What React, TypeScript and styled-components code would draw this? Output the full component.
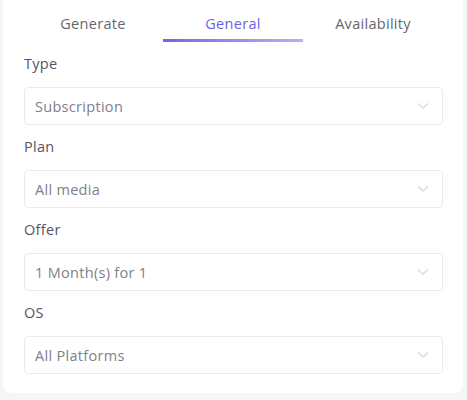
import { useState } from "react";
import styled, { createGlobalStyle } from "styled-components";

const GlobalStyle = createGlobalStyle`
  html, body {
    margin: 0;
    padding: 0;
    background: #f5f6f7;
    font-family: "Open Sans", "Liberation Sans", sans-serif;
    letter-spacing: 0.3px;
  }
`;

const Page = styled.div`
  padding: 0 4px 7px 3px;
  width: 467px;
  box-sizing: border-box;
`;

const Card = styled.div`
  background: #ffffff;
  border-radius: 0 0 8px 8px;
  padding: 0 20px 19px 20px;
`;

const Tabs = styled.div`
  display: flex;
  justify-content: center;
  margin-bottom: 7px;
`;

const Tab = styled.button<{ $active?: boolean }>`
  width: 140px;
  height: 42px;
  padding: 4px 0 0 0;
  border: none;
  background: transparent;
  font-family: inherit;
  letter-spacing: inherit;
  font-size: 14.5px;
  color: ${(p) => (p.$active ? "#6c63e0" : "#666670")};
  position: relative;
  cursor: pointer;

  &::after {
    content: "";
    display: ${(p) => (p.$active ? "block" : "none")};
    position: absolute;
    left: 0;
    right: 0;
    bottom: 0;
    height: 3px;
    background: linear-gradient(90deg, #7167e3 0%, #b7b1f1 100%);
  }
`;

const Field = styled.div<{ $first?: boolean }>`
  display: flex;
  flex-direction: column;
  margin-top: ${(p) => (p.$first ? 0 : 7)}px;
`;

const Label = styled.div`
  font-size: 14.5px;
  color: #55555f;
  height: 22px;
  line-height: 22px;
  margin: 4px 0 12px 1px;
`;

const Select = styled.div`
  display: flex;
  align-items: center;
  justify-content: space-between;
  height: 36px;
  border: 1px solid #ebebeb;
  border-radius: 4px;
  margin-left: 1px;
  padding: 0 13px 0 10px;
  font-size: 14.5px;
  color: #80808a;
`;

const Chevron = () => (
  <svg width="12" height="8" viewBox="0 0 12 8" fill="none">
    <path d="M1 1.5 L6 6 L11 1.5" stroke="#dcdcdc" strokeWidth="1.6" />
  </svg>
);

const fields = [
  { label: "Type", value: "Subscription" },
  { label: "Plan", value: "All media" },
  { label: "Offer", value: "1 Month(s) for 1" },
  { label: "OS", value: "All Platforms" },
];

export default function App() {
  const [tab, setTab] = useState("General");
  return (
    <>
      <GlobalStyle />
      <Page>
        <Card>
          <Tabs>
            {["Generate", "General", "Availability"].map((t) => (
              <Tab key={t} $active={tab === t} onClick={() => setTab(t)}>
                {t}
              </Tab>
            ))}
          </Tabs>
          {fields.map((f, i) => (
            <Field key={f.label} $first={i === 0}>
              <Label>{f.label}</Label>
              <Select>
                <span>{f.value}</span>
                <Chevron />
              </Select>
            </Field>
          ))}
        </Card>
      </Page>
    </>
  );
}
